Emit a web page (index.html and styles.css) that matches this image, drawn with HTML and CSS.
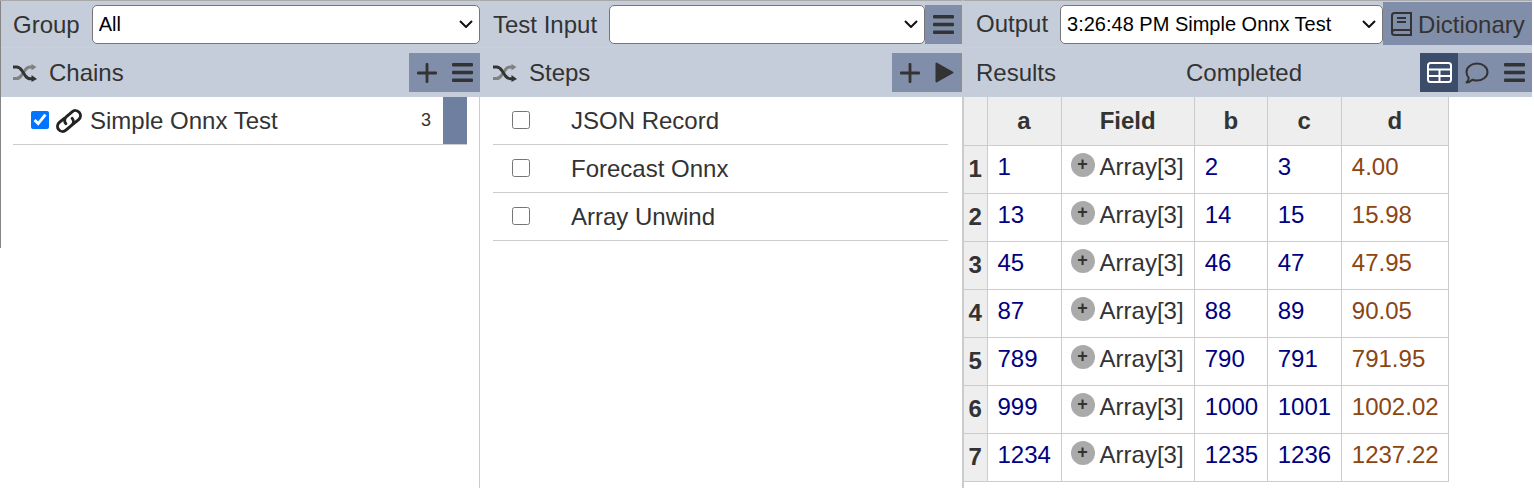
FILE: index.html
```html
<!DOCTYPE html>
<html lang="en">
<head>
<meta charset="utf-8">
<title>Chains</title>
<link rel="stylesheet" href="styles.css">
</head>
<body>
<svg class="defs" width="0" height="0" aria-hidden="true">
  <defs>
    <symbol id="bars" viewBox="0 0 21 19"><rect x="0" y="0" width="21" height="3.400" rx="1"/><rect x="0" y="7.800" width="21" height="3.400" rx="1"/><rect x="0" y="15.600" width="21" height="3.400" rx="1"/></symbol>
    <symbol id="plus" viewBox="0 0 20 20"><rect x="0" y="8.600" width="20" height="2.800" rx="1"/><rect x="8.600" y="0" width="2.800" height="20" rx="1"/></symbol>
    <symbol id="shuffle" viewBox="0 0 24 18">
      <path class="sh-light" d="M0 14.500h3.500c2.500 0 3.500-1 5-3l4-6c1.500-2 3-2.500 5-2.500h1.500"/>
      <path class="sh-light-fill" d="M18.500 0l5 3-5 3.500z"/>
      <path class="sh-dark" d="M0 3h3.500c2.500 0 3.500 1 5 3l4 6c1.500 2 3 2.800 5 2.800h1.500"/>
      <path class="sh-dark-fill" d="M18.500 11l5.500 4-5.500 3z"/>
    </symbol>
  </defs>
</svg>
<div class="app">
  <section class="col col-left">
    <div class="col-frame">
      <div class="bar bar-top">
        <span class="lbl lbl-group">Group</span>
        <select class="sel sel-fill"><option>All</option></select>
      </div>
      <div class="bar bar-sub">
        <svg class="ic-shuffle"><use href="#shuffle"/></svg>
        <span class="lbl">Chains</span>
        <div class="btns btns-chains">
          <svg class="ic-plus"><use href="#plus"/></svg>
          <svg class="ic-bars"><use href="#bars"/></svg>
        </div>
      </div>
      <div class="list">
        <div class="row">
          <input class="chk chk-chain" type="checkbox" checked>
          <svg class="ic-link" viewBox="-15 -13 30 26">
            <g fill="none" stroke="#222" stroke-width="3.200" stroke-linecap="round" transform="rotate(-40)">
              <path d="M-2-5.500H-9a5.500 5.500 0 0 0 0 11H-1a5.500 5.500 0 0 0 5.500-5.500"/>
              <path d="M2 5.500H9a5.500 5.500 0 0 0 0-11H1a5.500 5.500 0 0 0-5.500 5.500"/>
            </g>
          </svg>
          <span class="row-name">Simple Onnx Test</span>
          <span class="count">3</span>
          <span class="row-tab"></span>
        </div>
      </div>
    </div>
  </section>

  <section class="col col-mid">
    <div class="bar bar-top">
      <span class="lbl lbl-input">Test Input</span>
      <select class="sel sel-fill"><option></option></select>
      <div class="btn-menu"><svg class="ic-bars"><use href="#bars"/></svg></div>
    </div>
    <div class="bar bar-sub">
      <svg class="ic-shuffle"><use href="#shuffle"/></svg>
      <span class="lbl">Steps</span>
      <div class="btns btns-steps">
        <svg class="ic-plus"><use href="#plus"/></svg>
        <svg class="ic-play" viewBox="0 0 19 21"><path d="M1.500 1.500l16 9-16 9z" stroke-linejoin="round"/></svg>
      </div>
    </div>
    <div class="list">
      <div class="row"><input class="chk" type="checkbox"><span class="step-name">JSON Record</span></div>
      <div class="row"><input class="chk" type="checkbox"><span class="step-name">Forecast Onnx</span></div>
      <div class="row"><input class="chk" type="checkbox"><span class="step-name">Array Unwind</span></div>
    </div>
  </section>

  <section class="col col-right">
    <div class="bar bar-top">
      <span class="lbl lbl-output">Output</span>
      <select class="sel sel-output"><option>3:26:48 PM Simple Onnx Test</option></select>
      <div class="btn-dict">
        <svg class="ic-book" viewBox="0 0 21 24" fill="none" stroke="#333" stroke-width="2">
          <path d="M1 19.500V3.500C1 2 2 1 3.500 1H20v17H3.500C2 18 1 19 1 20.500S2 23 3.500 23H20v-5"/>
          <path d="M6 6h9M6 10h9"/>
        </svg>
        <span class="lbl lbl-dict">Dictionary</span>
      </div>
    </div>
    <div class="bar bar-sub">
      <span class="lbl lbl-results">Results</span>
      <span class="lbl lbl-status">Completed</span>
      <div class="btns btns-results">
        <div class="btn-active">
          <svg class="ic-table" viewBox="0 0 25 21" fill="none" stroke="#fff" stroke-width="2">
            <rect x="1" y="1" width="23" height="19" rx="2.500"/>
            <path d="M1 7.500h23M1 14h23M12.500 7.500V20"/>
          </svg>
        </div>
        <svg class="ic-comment" viewBox="0 0 24 22" fill="none" stroke="#333" stroke-width="2">
          <path d="M12 1.500c6 0 10.500 3.700 10.500 8.500s-4.500 8.500-10.500 8.500c-1.700 0-3.200-.3-4.600-.8-1.500 1.400-3.500 2.600-5.900 2.800 1.200-1.200 2-2.800 2.300-4.400C2.500 14.500 1.500 12.400 1.500 10 1.500 5.200 6 1.500 12 1.500z" stroke-linejoin="round"/>
        </svg>
        <svg class="ic-bars"><use href="#bars"/></svg>
      </div>
    </div>
    <table class="grid">
      <colgroup><col class="c-n"><col class="c-a"><col class="c-f"><col class="c-b"><col class="c-c"><col class="c-d"></colgroup>
      <thead><tr><th></th><th>a</th><th>Field</th><th>b</th><th>c</th><th>d</th></tr></thead>
      <tbody>
        <tr><th>1</th><td class="num">1</td><td class="fld"><span class="arr"><i class="exp">+</i>Array[3]</span></td><td class="num">2</td><td class="num">3</td><td class="dec">4.00</td></tr>
        <tr><th>2</th><td class="num">13</td><td class="fld"><span class="arr"><i class="exp">+</i>Array[3]</span></td><td class="num">14</td><td class="num">15</td><td class="dec">15.98</td></tr>
        <tr><th>3</th><td class="num">45</td><td class="fld"><span class="arr"><i class="exp">+</i>Array[3]</span></td><td class="num">46</td><td class="num">47</td><td class="dec">47.95</td></tr>
        <tr><th>4</th><td class="num">87</td><td class="fld"><span class="arr"><i class="exp">+</i>Array[3]</span></td><td class="num">88</td><td class="num">89</td><td class="dec">90.05</td></tr>
        <tr><th>5</th><td class="num">789</td><td class="fld"><span class="arr"><i class="exp">+</i>Array[3]</span></td><td class="num">790</td><td class="num">791</td><td class="dec">791.95</td></tr>
        <tr><th>6</th><td class="num">999</td><td class="fld"><span class="arr"><i class="exp">+</i>Array[3]</span></td><td class="num">1000</td><td class="num">1001</td><td class="dec">1002.02</td></tr>
        <tr><th>7</th><td class="num">1234</td><td class="fld"><span class="arr"><i class="exp">+</i>Array[3]</span></td><td class="num">1235</td><td class="num">1236</td><td class="dec">1237.22</td></tr>
      </tbody>
    </table>
  </section>
</div>
</body>
</html>
```
FILE: styles.css
```css
* { box-sizing: border-box; }
html, body { margin: 0; height: 100%; overflow: hidden; background: #fff; }
body { font-family: "Liberation Sans", Arial, sans-serif; font-size: 24px; color: #333; }
.defs { position: absolute; }
.app { display: grid; grid-template-columns: 480px 482px 570px; height: 488px; }
.col { min-width: 0; display: flex; flex-direction: column; border-top: 1px solid #a9a9a9; }
.col-left { border-right: 1px solid #ccc; }
.col-frame { height: 247px; border-left: 1px solid #858585; }
.col-frame .bar { margin-right: -1px; }

.bar { display: flex; align-items: center; background: #c5cdda; }
.bar-top { height: 47px; border-bottom: 1px solid #ccd0d6; }
.bar-sub { height: 49px; }
.lbl { line-height: 28px; white-space: nowrap; }
.col-left .bar { padding-left: 12px; }
.col-mid .bar { padding-left: 13px; }
.lbl-group { margin-right: 12px; margin-top: 2px; }
.lbl-input { margin-right: 12px; margin-top: 2px; }
.lbl-dict { margin-top: 2px; }
.lbl-output { margin-left: 12px; margin-right: 12px; }
.lbl-results { margin-left: 12px; width: 210px; }
.lbl-status { flex: 1; }

.sel { height: 39px; font: 20px "Liberation Sans", Arial, sans-serif; color: #000; border: 1px solid #767676; border-radius: 5px; padding: 0 24px 0 6px; appearance: none; -webkit-appearance: none; background: #fff url("data:image/svg+xml,%3Csvg xmlns='http://www.w3.org/2000/svg' width='14' height='8' viewBox='0 0 14 8'%3E%3Cpath d='M1 1l6 6 6-6' fill='none' stroke='%23111' stroke-width='2'/%3E%3C/svg%3E") no-repeat right 6px center; }
.sel-fill { flex: 1; min-width: 0; }
.sel-output { width: 323px; flex: none; }

.ic-shuffle { width: 24px; height: 18px; margin-right: 12px; margin-top: 1px; flex: none; }
.sh-light, .sh-dark { fill: none; stroke-width: 3; }
.sh-light { stroke: #808080; }
.sh-light-fill { fill: #808080; }
.sh-dark { stroke: #333; }
.sh-dark-fill { fill: #333; }

.btns { margin-left: auto; height: 39px; display: flex; align-items: center; background: #818ea9; fill: #333; }
.btns-chains { width: 71px; padding-left: 8px; gap: 15px; }
.btns-steps { width: 70px; padding-left: 8px; gap: 15px; }
.btns-results { width: 112px; gap: 0; }
.ic-plus { width: 20px; height: 20px; flex: none; }
.ic-bars { width: 21px; height: 19px; flex: none; fill: #333; }
.ic-play { width: 19px; height: 21px; flex: none; fill: #333; stroke: #333; stroke-width: 2; }
.btn-menu { width: 37px; height: 39px; background: #818ea9; display: flex; align-items: center; justify-content: center; flex: none; }
.btn-dict { flex: 1; height: 43px; margin-top: -1px; display: flex; align-items: center; gap: 6px; padding-left: 8px; background: #818ea9; }
.ic-book { width: 21px; height: 24px; flex: none; }
.btn-active { width: 38px; height: 39px; background: #3c4c6b; display: flex; align-items: center; justify-content: center; flex: none; }
.ic-table { width: 25px; height: 21px; }
.ic-comment { width: 24px; height: 22px; margin-left: 7px; margin-right: 15px; flex: none; }

.list { padding: 0 12px; }
.col-mid .list { padding: 0 14px 0 13px; }
.row { height: 48px; display: flex; align-items: center; border-bottom: 1px solid #ccc; }
.chk { width: 18px; height: 18px; margin: -1px 0 0 19px; flex: none; }
.chk-chain { margin-left: 18px; }
.ic-link { width: 28px; height: 24px; margin-left: 6px; flex: none; }
.row-name { margin-left: 7px; }
.count { margin-left: auto; font-size: 18px; margin-right: 12px; }
.row-tab { width: 24px; align-self: stretch; background: #6f7f9f; }
.step-name { margin-left: 41px; }

.col-right { border-left: 2px solid #ccc; }
.grid { border-collapse: collapse; table-layout: fixed; width: 485px; }
.c-n { width: 23px; }
.c-a { width: 74px; }
.c-f { width: 133px; }
.c-b { width: 73px; }
.c-c { width: 74px; }
.c-d { width: 107px; }
.grid th, .grid td { border: 1px solid #ccc; height: 48px; padding: 0; white-space: nowrap; }
.grid tr:first-child th { border-top: 0; }
.grid thead th { background: #eee; font-weight: bold; text-align: center; height: 48px; }
.grid tbody th { background: #eee; font-weight: bold; text-align: center; border-left: 0; }
.grid thead th:first-child { border-left: 0; }
.grid td { padding: 0 0 4px 10px; vertical-align: middle; }
.grid .fld { padding-left: 9px; }
.num { color: #000080; }
.dec { color: #8b4513; }
.arr { display: flex; align-items: center; gap: 5px; }
.exp { width: 24px; height: 24px; margin-top: -4px; border-radius: 50%; background: #aaa; color: #333; font-style: normal; font-weight: bold; font-size: 18px; line-height: 23px; text-align: center; flex: none; }
```
